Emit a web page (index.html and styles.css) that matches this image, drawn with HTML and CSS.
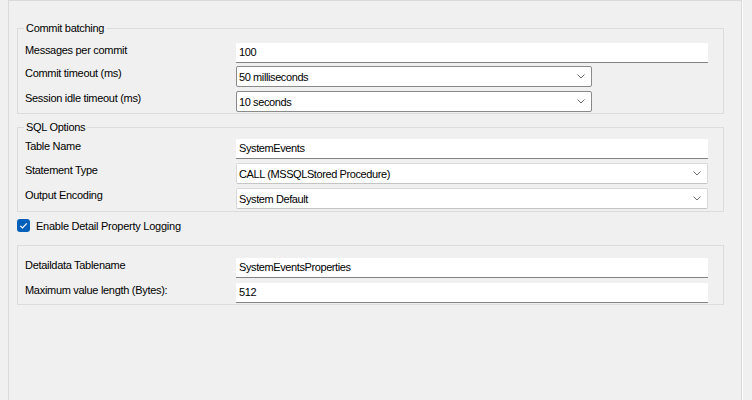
FILE: index.html
```html
<!DOCTYPE html>
<html lang="en">
<head>
    <meta charset="UTF-8">
    <meta name="viewport" content="width=device-width, initial-scale=1.0">
    <title>Database Output Settings</title>
    <link rel="stylesheet" href="styles.css">
</head>
<body>
    <div class="panel">
        <fieldset class="group group-commit">
            <legend>Commit batching</legend>
            <div class="row">
                <span class="label">Messages per commit</span>
                <div class="field text">100</div>
            </div>
            <div class="row">
                <span class="label">Commit timeout (ms)</span>
                <div class="field combo short">
                    <span>50 milliseconds</span>
                    <svg class="chevron" width="8" height="5" viewBox="0 0 8 5"><path d="M0.5 0.5 L4 4 L7.5 0.5" /></svg>
                </div>
            </div>
            <div class="row">
                <span class="label">Session idle timeout (ms)</span>
                <div class="field combo short">
                    <span>10 seconds</span>
                    <svg class="chevron" width="8" height="5" viewBox="0 0 8 5"><path d="M0.5 0.5 L4 4 L7.5 0.5" /></svg>
                </div>
            </div>
        </fieldset>

        <fieldset class="group group-sql">
            <legend>SQL Options</legend>
            <div class="row">
                <span class="label">Table Name</span>
                <div class="field text">SystemEvents</div>
            </div>
            <div class="row">
                <span class="label">Statement Type</span>
                <div class="field combo light">
                    <span>CALL (MSSQLStored Procedure)</span>
                    <svg class="chevron" width="8" height="5" viewBox="0 0 8 5"><path d="M0.5 0.5 L4 4 L7.5 0.5" /></svg>
                </div>
            </div>
            <div class="row">
                <span class="label">Output Encoding</span>
                <div class="field combo light">
                    <span>System Default</span>
                    <svg class="chevron" width="8" height="5" viewBox="0 0 8 5"><path d="M0.5 0.5 L4 4 L7.5 0.5" /></svg>
                </div>
            </div>
        </fieldset>

        <label class="check">
            <span class="check-box">
                <svg width="13" height="13" viewBox="0 0 13 13"><path d="M3.3 6.8 L5.5 9 L9.8 4.3" /></svg>
            </span>
            Enable Detail Property Logging
        </label>

        <div class="group group-detail">
            <div class="row">
                <span class="label">Detaildata Tablename</span>
                <div class="field text">SystemEventsProperties</div>
            </div>
            <div class="row">
                <span class="label">Maximum value length (Bytes):</span>
                <div class="field text">512</div>
            </div>
        </div>
    </div>
</body>
</html>
```

FILE: styles.css
```css
body {
    margin: 0;
    background-color: #f0f0f0;
    font-family: "Liberation Sans", Arial, sans-serif;
    font-size: 11px;
    color: #000;
}

.panel {
    margin-left: 8px;
    width: 707px;
    height: 399px;
    padding: 0 17px 0 8px;
    border: 1px solid #dadada;
    border-bottom: none;
    box-shadow: 1px 0 0 #fbfbfb;
    overflow: hidden;
}

/* Group boxes */
.group {
    margin: 0;
    padding: 0 15px 0 7px;
    border: 1px solid #dcdcdc;
    display: flex;
    flex-direction: column;
    gap: 4px;
    min-width: 0;
}

.group legend {
    padding: 0 2px;
    margin-left: -1px;
    line-height: 14px;
    letter-spacing: -0.3px;
}

.group-commit {
    margin-top: 20px;
    padding-top: 8px;
    padding-bottom: 1px;
    gap: 3px;
}

.group-commit .row:last-child {
    margin-top: 1px;
}

.group-sql {
    margin-top: 6px;
    padding-top: 5px;
    padding-bottom: 2px;
}

.group-detail {
    margin-top: 13px;
    padding-top: 12px;
    padding-bottom: 1px;
    gap: 5px;
}

.row {
    display: flex;
    align-items: flex-start;
}

.label {
    width: 211px;
    flex-shrink: 0;
    line-height: 14px;
    letter-spacing: -0.3px;
}

/* Edit and combo fields */
.field {
    flex: 1;
    box-sizing: border-box;
    background-color: #fff;
    padding-left: 3px;
    letter-spacing: -0.4px;
    white-space: nowrap;
}

.field.text {
    height: 20px;
    line-height: 19px;
    border-bottom: 1px solid #838383;
}

.field.combo {
    height: 21px;
    border: 1px solid #8a8a8a;
    border-radius: 2px;
    display: flex;
    align-items: center;
    justify-content: space-between;
    padding-left: 2px;
    padding-right: 6px;
}

.field.combo.short {
    flex: none;
    width: 356px;
}

.field.combo.light {
    border-color: #d9d9d9;
    border-bottom-color: #c4c4c4;
}

.chevron path {
    fill: none;
    stroke: #6d6d6d;
    stroke-width: 1;
}

/* Checkbox */
.check {
    display: flex;
    align-items: center;
    gap: 6px;
    margin-top: 7px;
    height: 13px;
    letter-spacing: -0.25px;
}

.check-box {
    width: 13px;
    height: 13px;
    border-radius: 3px;
    background-color: #005fb8;
    display: flex;
}

.check-box path {
    fill: none;
    stroke: #fff;
    stroke-width: 1.2;
}
```
